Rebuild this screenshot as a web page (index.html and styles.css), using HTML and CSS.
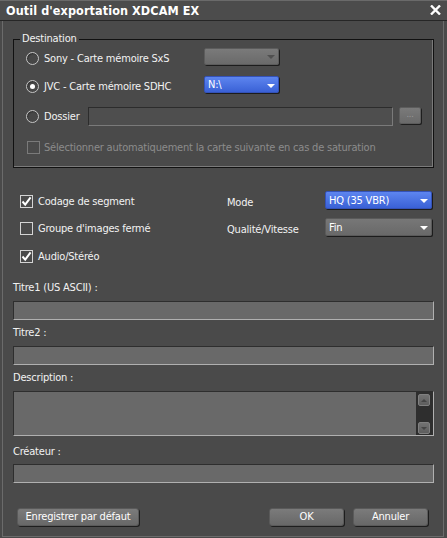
FILE: index.html
```html
<!DOCTYPE html>
<html lang="fr">
<head>
<meta charset="utf-8">
<title>Outil d'exportation XDCAM EX</title>
<link rel="stylesheet" href="styles.css">
</head>
<body>
<div class="window">
  <div class="titlebar">
    <span class="title">Outil d'exportation XDCAM EX</span>
    <svg class="close" width="11" height="10" viewBox="0 0 11 10"><path d="M1 0.5 L10 9.5 M10 0.5 L1 9.5" stroke="#fff" stroke-width="2.4" fill="none"/></svg>
  </div>
  <div class="frame">
    <div class="group">
      <div class="legend">Destination</div>
      <div class="grow r1">
        <span class="radio"></span>
        <span class="glabel">Sony - Carte mémoire SxS</span>
        <div class="select sel-small off"><span></span><i class="arrow"></i></div>
      </div>
      <div class="grow r2">
        <span class="radio on"></span>
        <span class="glabel">JVC - Carte mémoire SDHC</span>
        <div class="select sel-small blue"><span>N:\</span><i class="arrow"></i></div>
      </div>
      <div class="grow r3">
        <span class="radio"></span>
        <span class="glabel short">Dossier</span>
        <div class="pathfield"></div>
        <div class="browse">...</div>
      </div>
      <div class="grow r4">
        <span class="check off"></span>
        <span class="dis">Sélectionner automatiquement la carte suivante en cas de saturation</span>
      </div>
    </div>

    <div class="options">
      <div class="opt"><span class="check"><svg width="11" height="11" viewBox="0 0 11 11"><path d="M1.5 5.5 L4.2 8.6 L9.6 1.4" stroke="#fff" stroke-width="2" fill="none"/></svg></span>Codage de segment</div>
      <div class="olabel">Mode</div>
      <div class="select sel-wide blue"><span>HQ (35 VBR)</span><i class="arrow"></i></div>

      <div class="opt"><span class="check"></span>Groupe d'images fermé</div>
      <div class="olabel">Qualité/Vitesse</div>
      <div class="select sel-wide grey"><span>Fin</span><i class="arrow"></i></div>

      <div class="opt"><span class="check"><svg width="11" height="11" viewBox="0 0 11 11"><path d="M1.5 5.5 L4.2 8.6 L9.6 1.4" stroke="#fff" stroke-width="2" fill="none"/></svg></span>Audio/Stéréo</div>
    </div>

    <div class="fields">
      <div class="flabel">Titre1 (US ASCII) :</div>
      <div class="input"></div>
      <div class="flabel">Titre2 :</div>
      <div class="input"></div>
      <div class="flabel">Description :</div>
      <div class="textarea">
        <div class="tacontent"></div>
        <div class="scroll">
          <span class="sbtn"><i class="up"></i></span>
          <span class="sbtn"><i class="down"></i></span>
        </div>
      </div>
      <div class="flabel creator">Créateur :</div>
      <div class="input"></div>
    </div>

    <div class="footer">
      <div class="btn b-default">Enregistrer par défaut</div>
      <div class="spacer"></div>
      <div class="btn b-ok">OK</div>
      <div class="btn b-cancel">Annuler</div>
    </div>
  </div>
</div>
</body>
</html>
```
FILE: styles.css
```css
* { box-sizing: border-box; }
html, body { margin: 0; padding: 0; }
body {
  width: 447px;
  height: 538px;
  background: #4a4a4a;
  color: #f2f2f2;
  font-family: "DejaVu Sans Condensed", "Liberation Sans", sans-serif;
  font-size: 11px;
  letter-spacing: -0.2px;
  overflow: hidden;
}
.window {
  display: flex;
  flex-direction: column;
  width: 447px;
  height: 538px;
}
.titlebar {
  height: 21px;
  flex: none;
  display: flex;
  align-items: center;
  justify-content: space-between;
  padding: 0 6px 1px 6px;
  background: #4c4c4c;
  border-top: 1px solid #6a6a6a;
  border-bottom: 1px solid #262626;
}
.title {
  font-weight: bold;
  font-size: 12.5px;
  color: #fff;
  letter-spacing: 0.1px;
}
.close { display: block; }
.frame {
  flex: 1;
  margin: 0 3px 1px 2px;
  border: 1px solid #6b6b6b;
  border-top: none;
  padding: 0 9px 0 10px;
  display: flex;
  flex-direction: column;
}

/* group box */
.group {
  margin-top: 18px;
  height: 129px;
  flex: none;
  border: 1px solid #111;
  box-shadow: inset -1px -1px 0 #7b7b7b;
  padding-bottom: 4px;
}
.legend {
  width: max-content;
  margin: -8px 0 0 6px;
  padding: 0 2px;
  line-height: 14px;
  background: #4a4a4a;
}
.grow {
  display: flex;
  align-items: center;
  padding-left: 12px;
}
.r1 { height: 25px; }
.r2 { height: 30px; }
.r3 { height: 31px; }
.r4 { height: 31px; padding-left: 13px; }
.radio {
  width: 13px;
  height: 13px;
  border-radius: 50%;
  border: 1px solid #c6c6c6;
  background: #474747;
  box-shadow: inset 1px 1px 1px #333;
  margin-right: 5px;
  flex: none;
  display: flex;
  align-items: center;
  justify-content: center;
}
.radio.on::after {
  content: "";
  width: 5px;
  height: 5px;
  border-radius: 50%;
  background: #fff;
}
.glabel { width: 160px; flex: none; }
.glabel.short { width: 44px; }
.dis { color: #8c8c8c; }

/* selects */
.select {
  display: flex;
  align-items: center;
  justify-content: space-between;
  border-radius: 2px;
  padding: 0 3px 0 3px;
  box-shadow: 1px 1px 0 #1c1c1c;
  color: #fff;
  flex: none;
}
.sel-small { width: 75px; height: 17px; }
.r1 .select { margin-bottom: 5px; }
.r2 .select { margin-bottom: 3px; }
.sel-wide { width: 107px; height: 18px; margin-bottom: 3px; }
.select.off { background: linear-gradient(#7a7a7a, #6a6a6a); border: 1px solid #5c5c5c; }
.select.blue { background: linear-gradient(#5d85ef, #3a61d6); border: 1px solid #3452b8; }
.select.grey { background: linear-gradient(#777, #696969); border: 1px solid #5a5a5a; }
.arrow {
  width: 0;
  height: 0;
  border-left: 4px solid transparent;
  border-right: 4px solid transparent;
  border-top: 4px solid #fff;
  margin-top: 2px;
}
.select.off .arrow { border-top-color: #505050; }

.pathfield {
  width: 305px;
  height: 19px;
  background: #4e4e4e;
  border: 1px solid #7a7a7a;
  border-top-color: #2c2c2c;
  border-left-color: #2c2c2c;
  margin-right: 6px;
  flex: none;
}
.browse {
  width: 22px;
  height: 17px;
  margin-bottom: 2px;
  border-radius: 2px;
  background: linear-gradient(#7a7a7a, #6a6a6a);
  border: 1px solid #5c5c5c;
  box-shadow: 1px 1px 0 #1e1e1e;
  color: #9a9a9a;
  font-size: 9px;
  line-height: 12px;
  text-align: center;
}

/* checkboxes */
.check {
  width: 13px;
  height: 13px;
  border: 1px solid #d4d4d4;
  background: #4a4a4a;
  margin-right: 5px;
  flex: none;
  display: flex;
  align-items: center;
  justify-content: center;
}
.check.off { border-color: #7a7a7a; margin-right: 4px; }
.check svg { display: block; }

.options {
  margin-top: 20px;
  padding-left: 7px;
  display: grid;
  grid-template-columns: 207px 98px 108px;
  grid-template-rows: 27px 27px 28px;
  align-items: center;
}
.opt { display: flex; align-items: center; grid-column: 1; }
.olabel { padding-top: 1px; }

/* fields */
.fields {
  margin-top: 11px;
  display: flex;
  flex-direction: column;
}
.flabel { line-height: 14px; margin-bottom: 6px; }
.input, .textarea {
  background: #696969;
  border: 1px solid #b0b0b0;
  border-top-color: #2e2e2e;
  border-left-color: #2e2e2e;
}
.input { height: 19px; margin-bottom: 6px; }
.textarea {
  height: 45px;
  display: flex;
}
.tacontent { flex: 1; }
.scroll {
  width: 17px;
  background: #2e2e2e;
  display: flex;
  flex-direction: column;
  justify-content: space-between;
  padding: 2px 3px 1px 2px;
}
.sbtn {
  width: 12px;
  height: 12px;
  border-radius: 2px;
  background: linear-gradient(#727272, #5e5e5e);
  border: 1px solid #808080;
  display: flex;
  align-items: center;
  justify-content: center;
}
.sbtn i { width: 0; height: 0; border-left: 3px solid transparent; border-right: 3px solid transparent; }
.sbtn .up { border-bottom: 3px solid #454545; }
.sbtn .down { border-top: 3px solid #454545; }
.flabel.creator { margin-top: 9px; margin-bottom: 5px; }

/* footer */
.footer {
  margin-top: 19px;
  display: flex;
  padding: 0 6px 0 4px;
}
.spacer { flex: 1; }
.btn {
  height: 18px;
  line-height: 16px;
  text-align: center;
  color: #fff;
  border-radius: 3px;
  background: linear-gradient(#7b7b7b, #686868);
  border: 1px solid #5a5a5a;
  box-shadow: 1px 1px 0 #1e1e1e;
}
.b-default { width: 122px; }
.b-ok { width: 75px; margin-right: 9px; }
.b-cancel { width: 75px; }
```
